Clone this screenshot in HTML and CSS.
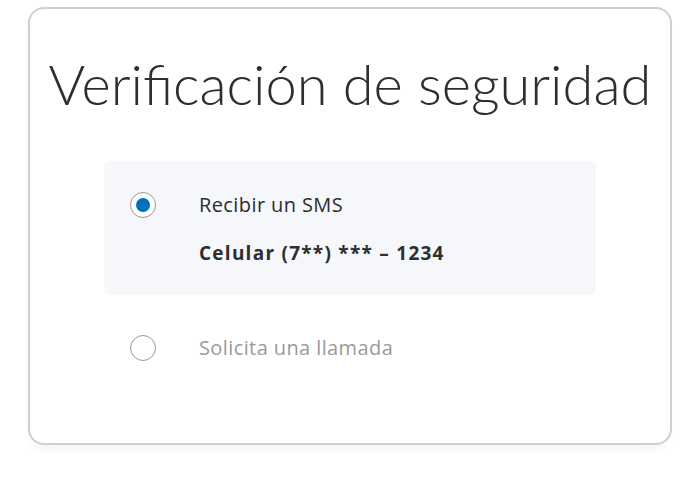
FILE: index.html
```html
<!DOCTYPE html>
<html lang="es">
<head>
    <meta charset="UTF-8">
    <meta name="viewport" content="width=device-width, initial-scale=1.0">
    <title>Verificación de seguridad</title>
    <link rel="stylesheet" href="styles.css">
</head>
<body>
    <div class="card">
        <h1>Verificación de seguridad</h1>

        <div class="option selected">
            <span class="radio checked"></span>
            <div class="option-text">
                <div class="label">Recibir un SMS</div>
                <div class="phone">Celular (7**) *** – 1234</div>
            </div>
        </div>

        <div class="option">
            <span class="radio"></span>
            <div class="option-text">
                <div class="label muted">Solicita una llamada</div>
            </div>
        </div>
    </div>
</body>
</html>
```

FILE: styles.css
```css
body {
    margin: 0;
    padding: 7px 28px;
    font-family: "Open Sans", Arial, sans-serif;
    color: #2c2e2f;
    background: #fff;
}
.card {
    border: 2px solid #cfcfcf;
    border-radius: 16px;
    box-shadow: 0 12px 16px -8px rgba(0, 0, 0, 0.06);
    padding: 0 74px 56px;
    height: 438px;
    box-sizing: border-box;
}
h1 {
    margin: 0 -60px;
    padding-top: 35px;
    height: 152px;
    box-sizing: border-box;
    font-family: Lato, "Open Sans", sans-serif;
    font-weight: 300;
    font-size: 56px;
    text-align: center;
    line-height: 80px;
    white-space: nowrap;
    color: #2c2e2f;
}
.option {
    display: flex;
    align-items: flex-start;
    padding: 32px 26px;
    border-radius: 6px;
}
.option + .option {
    padding-top: 41px;
}
.option.selected {
    background: #f5f7fa;
    height: 134px;
    box-sizing: border-box;
}
.radio {
    width: 26px;
    height: 26px;
    border: 1px solid #999;
    border-radius: 50%;
    box-sizing: border-box;
    background: #fff;
    flex-shrink: 0;
    display: flex;
    align-items: center;
    justify-content: center;
    margin-top: -1px;
}
.radio.checked::after {
    content: "";
    width: 14px;
    height: 14px;
    border-radius: 50%;
    background: #0070ba;
}
.option-text {
    margin-left: 43px;
}
.label {
    font-size: 20px;
    letter-spacing: 0.4px;
    line-height: 24px;
}
.phone {
    margin-top: 24px;
    font-size: 19px;
    font-weight: 700;
    letter-spacing: 1.25px;
    line-height: 24px;
}
.muted {
    color: #9a9a9a;
}
```
